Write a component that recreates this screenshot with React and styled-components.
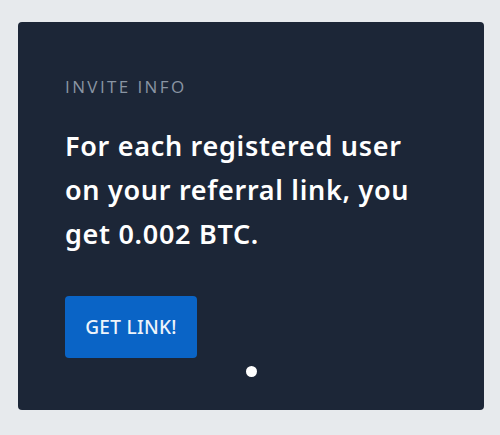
import styled, { createGlobalStyle } from "styled-components"

const GlobalStyle = createGlobalStyle`
  body {
    margin: 0;
    background: #e7eaed;
    font-family: "Noto Sans", "Open Sans", sans-serif;
  }
`

const Page = styled.div`
  width: 500px;
  height: 435px;
  padding: 22px 16px 25px 18px;
  box-sizing: border-box;
`

const Card = styled.div`
  height: 100%;
  background: #1c2637;
  border-radius: 4px;
  padding: 55px 40px 0 47px;
  box-sizing: border-box;
  display: flex;
  flex-direction: column;
  align-items: flex-start;
`

const Label = styled.div`
  font-family: "Open Sans", sans-serif;
  font-size: 17px;
  line-height: 20px;
  letter-spacing: 2.4px;
  color: #8a95a3;
  text-transform: uppercase;
`

const Heading = styled.h2`
  margin: 27px 0 0;
  font-size: 27px;
  font-weight: 600;
  line-height: 44px;
  letter-spacing: 0.7px;
  color: #ffffff;
  max-width: 365px;
`

const Button = styled.button`
  margin-top: 40px;
  width: 132px;
  height: 62px;
  border: none;
  border-radius: 4px;
  background: #0a64c6;
  color: #eef4fb;
  font-family: "Noto Sans", sans-serif;
  font-size: 19px;
  font-weight: 500;
  letter-spacing: 0.3px;
  cursor: pointer;
`

const Dots = styled.div`
  align-self: stretch;
  display: flex;
  justify-content: center;
  gap: 8px;
  margin: 8px -40px 0 -47px;
`

const Dot = styled.span`
  width: 11px;
  height: 11px;
  border-radius: 50%;
  background: ${p => (p.$active ? "#ffffff" : "rgba(255,255,255,0.3)")};
`

const App = () => {
  return (
    <>
      <GlobalStyle />
      <Page>
        <Card>
          <Label>Invite info</Label>
          <Heading>For each registered user on your referral link, you get 0.002 BTC.</Heading>
          <Button>GET LINK!</Button>
          <Dots>
            <Dot $active />
          </Dots>
        </Card>
      </Page>
    </>
  )
}

export default App
